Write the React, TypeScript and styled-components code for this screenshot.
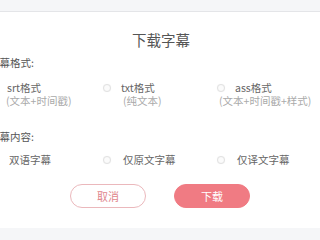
import React from 'react';
import styled, { createGlobalStyle } from 'styled-components';

const GlobalStyle = createGlobalStyle`
    html, body {
        margin: 0;
        padding: 0;
        background: #f5f6f8;
        overflow: hidden;
    }
    body {
        font-family: "Noto Sans CJK SC", "Noto Sans", sans-serif;
    }
`;

const Page = styled.div`
    width: 320px;
    height: 240px;
    display: flex;
    flex-direction: column;
    overflow: hidden;
`;

const TopBand = styled.div`
    height: 11px;
    flex: none;
    background: #f5f6f8;
    border-bottom: 1px solid #e4e5e8;
`;

const Dialog = styled.div`
    height: 216px;
    flex: none;
    background: #fff;
    display: flex;
    flex-direction: column;
    padding-top: 18px;
    box-sizing: border-box;
`;

const Title = styled.div`
    text-align: center;
    font-size: 14.5px;
    line-height: 20px;
    color: #555;
    padding-left: 2px;
`;

const Body = styled.div`
    margin-left: -11px;
    display: flex;
    flex-direction: column;
`;

const SectionLabel = styled.div<{ $top: number }>`
    margin-top: ${(p) => p.$top}px;
    font-size: 10.5px;
    line-height: 16px;
    color: #555;
`;

const OptionGrid = styled.div<{ $top: number; $gap: number }>`
    margin-top: ${(p) => p.$top}px;
    display: grid;
    grid-template-columns: 114px 114px 114px;

    --radio-gap: ${(p) => p.$gap}px;
`;

const Option = styled.label`
    display: flex;
    align-items: flex-start;
    cursor: pointer;
`;

const Radio = styled.span`
    flex: none;
    width: 6px;
    height: 6px;
    margin-top: 3px;
    margin-right: var(--radio-gap);
    border: 1px solid #e2e2e2;
    border-radius: 50%;
    background: #fbfbfb;
    box-shadow: 0 0 1px rgba(0, 0, 0, 0.08);
`;

const OptionText = styled.div`
    display: flex;
    flex-direction: column;
`;

const OptionName = styled.span`
    font-size: 10.5px;
    line-height: 13px;
    color: #666;
    white-space: nowrap;
`;

const OptionNote = styled.span<{ $indent: number }>`
    margin-left: ${(p) => p.$indent}px;
    font-size: 10.5px;
    line-height: 13px;
    color: #aaa;
    white-space: nowrap;
`;

const Buttons = styled.div`
    margin-top: 18px;
    display: flex;
    justify-content: center;
    gap: 28px;
`;

const Button = styled.button<{ $primary?: boolean }>`
    width: 76px;
    height: 24px;
    box-sizing: border-box;
    border-radius: 12px;
    border: 1px solid ${(p) => (p.$primary ? '#f07b83' : '#ebb8bc')};
    background: ${(p) => (p.$primary ? '#f07b83' : '#fff')};
    color: ${(p) => (p.$primary ? '#fff' : '#e0868c')};
    font-family: inherit;
    font-size: 11px;
    padding: 0;
    cursor: pointer;
`;

const BottomBand = styled.div`
    flex: 1;
    background: #f5f6f8;
`;

const formats = [
    { name: 'srt格式', note: '(文本+时间戳)', indent: -1 },
    { name: 'txt格式', note: '(纯文本)', indent: 2 },
    { name: 'ass格式', note: '(文本+时间戳+样式)', indent: -16 },
];

const contents = ['双语字幕', '仅原文字幕', '仅译文字幕'];

export default function App() {
    return (
        <Page>
            <GlobalStyle />
            <TopBand />
            <Dialog>
                <Title>下载字幕</Title>
                <Body>
                    <SectionLabel $top={5}>字幕格式:</SectionLabel>
                    <OptionGrid $top={10} $gap={10}>
                        {formats.map((f) => (
                            <Option key={f.name}>
                                <Radio />
                                <OptionText>
                                    <OptionName>{f.name}</OptionName>
                                    <OptionNote $indent={f.indent}>
                                        {f.note}
                                    </OptionNote>
                                </OptionText>
                            </Option>
                        ))}
                    </OptionGrid>
                    <SectionLabel $top={22}>字幕内容:</SectionLabel>
                    <OptionGrid $top={8} $gap={12}>
                        {contents.map((c) => (
                            <Option key={c}>
                                <Radio />
                                <OptionName>{c}</OptionName>
                            </Option>
                        ))}
                    </OptionGrid>
                </Body>
                <Buttons>
                    <Button>取消</Button>
                    <Button $primary>下载</Button>
                </Buttons>
            </Dialog>
            <BottomBand />
        </Page>
    );
}
